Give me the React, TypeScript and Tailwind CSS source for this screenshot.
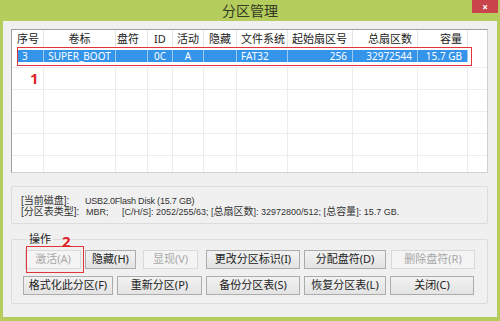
import React from 'react';

const cols = [
  { label: '序号', w: 32, align: 'text-left pl-[5px]' },
  { label: '卷标', w: 72, align: 'text-center' },
  { label: '盘符', w: 32, align: 'text-right pr-[8px]' },
  { label: 'ID', w: 25, align: 'text-center' },
  { label: '活动', w: 31, align: 'text-center' },
  { label: '隐藏', w: 33, align: 'text-center' },
  { label: '文件系统', w: 51, align: 'text-left pl-[4px]' },
  { label: '起始扇区号', w: 65, align: 'text-right pr-[5px]' },
  { label: '总扇区数', w: 65, align: 'text-right pr-[5px]' },
  { label: '容量', w: 50, align: 'text-right pr-[5px]' },
];

const rowData = ['3', 'SUPER_BOOT', '', '0C', 'A', '', 'FAT32', '256', '32972544', '15.7 GB'];

function Btn({ label, w, disabled }: { label: string; w: number; disabled?: boolean }) {
  return (
    <div
      style={{ width: w }}
      className={`h-[19px] flex items-center justify-center text-[11px] border ${
        disabled
          ? 'border-[#d9d9d9] bg-[#f4f4f4] text-[#a8a8a8]'
          : 'border-[#acacac] bg-gradient-to-b from-[#f2f2f2] to-[#e3e3e3] text-[#222]'
      }`}
    >
      {label}
    </div>
  );
}

export default function App() {
  return (
    <div className="w-[500px] h-[321px] bg-[#b4cd5c] flex flex-col font-['Noto_Sans','Noto_Sans_CJK_SC',sans-serif] text-[#222] overflow-hidden">
      {/* title bar */}
      <div className="h-[21px] relative flex items-center justify-center">
        <span className="text-[14px] text-[#333824] font-['Noto_Sans_CJK_SC',sans-serif]">分区管理</span>
        <div className="absolute top-0 right-[2px] w-[26px] h-[13px] bg-[#c9454b] flex items-center justify-center text-white text-[10px] leading-none font-bold">
          ×
        </div>
      </div>

      {/* client */}
      <div className="mx-[3px] mb-[4px] flex-1 bg-[#f0f0f0] pl-[8px] pr-[9px] pt-[8px] flex flex-col relative">
        {/* list view */}
        <div className="h-[144px] bg-white border border-[#a0a0a0] border-b-[#d0d0d0] border-r-[#d0d0d0] overflow-hidden">
          <div className="flex h-[17px] items-center text-[11px] text-[#222]">
            {cols.map((c) => (
              <div key={c.label} style={{ width: c.w }} className={`h-full leading-[17px] border-r border-[#e5e5e5] ${c.align}`}>
                {c.label}
              </div>
            ))}
            <div className="flex-1" />
          </div>
          <div className="h-[21px] flex items-center border-b border-[#ececec]">
            <div className="flex h-[12px] bg-[#3394ea] text-white text-[10px] leading-[12px] mx-[5px] -mt-[2px]">
              {cols.map((c, i) => (
                <div
                  key={c.label}
                  style={{ width: i === 0 ? c.w - 5 : c.w }}
                  className={`h-full border-r border-[#9ccaf5] ${c.align}`}
                >
                  {rowData[i]}
                </div>
              ))}
            </div>
          </div>
          {Array.from({ length: 5 }).map((_, r) => (
            <div key={r} className="h-[22px] flex border-b border-[#ececec]">
              {cols.map((c) => (
                <div key={c.label} style={{ width: c.w }} className="h-full border-r border-[#ececec]" />
              ))}
            </div>
          ))}
        </div>

        {/* disk info */}
        <div className="mt-[13px] h-[38px] border border-[#dcdcdc] rounded-[2px] pt-[8px] pl-[9px] text-[10px] leading-[11px] text-[#333] font-['Liberation_Sans','Noto_Sans_CJK_SC',sans-serif]">
          <div className="flex h-[11px] items-baseline">
            <span className="w-[64px]">[当前磁盘]:</span>
            <span className="text-[9px] tracking-[-0.2px]">USB2.0Flash Disk (15.7 GB)</span>
          </div>
          <div className="flex h-[11px] items-baseline">
            <span className="w-[65px]">[分区表类型]:</span>
            <span className="w-[36px] text-[9px]">MBR;</span>
            <span className="text-[9px]">
              [C/H/S]: 2052/255/63; [<span className="text-[10px]">总扇区数</span>]: 32972800/512; [
              <span className="text-[10px]">总容量</span>]: 15.7 GB.
            </span>
          </div>
        </div>

        {/* operations */}
        <fieldset className="mt-[9px] h-[71px] border border-[#dcdcdc] rounded-[2px] pl-[13px] pr-[2px]">
          <legend className="text-[11px] leading-[12px] px-[2px] ml-[2px] text-[#222]">操作</legend>
          <div className="flex flex-col gap-[7px] mt-[5px]">
            <div className="flex items-center">
              <Btn label="激活(A)" w={56} disabled />
              <div className="w-[4px]" />
              <Btn label="隐藏(H)" w={51} />
              <div className="w-[7px]" />
              <Btn label="显现(V)" w={55} disabled />
              <div className="w-[8px]" />
              <Btn label="更改分区标识(I)" w={94} />
              <div className="w-[4px]" />
              <Btn label="分配盘符(D)" w={82} />
              <div className="w-[5px]" />
              <Btn label="删除盘符(R)" w={84} disabled />
            </div>
            <div className="flex items-center -ml-[2px] gap-[4px]">
              <Btn label="格式化此分区(F)" w={90} />
              <Btn label="重新分区(P)" w={85} />
              <Btn label="备份分区表(S)" w={94} />
              <Btn label="恢复分区表(L)" w={82} />
              <Btn label="关闭(C)" w={84} />
            </div>
          </div>
        </fieldset>

        {/* annotations */}
        <div className="absolute left-[14px] top-[26px] w-[455px] h-[19px] border border-[#e0343a] pointer-events-none" />
        <div className="absolute left-[27px] top-[50px] text-[#e0242a] text-[15px] font-bold leading-none">1</div>
        <div className="absolute left-[23px] top-[225px] w-[58px] h-[27px] border border-[#e0343a] pointer-events-none" />
        <div className="absolute left-[59px] top-[213px] text-[#e0242a] text-[15px] font-bold leading-none">2</div>
      </div>
    </div>
  );
}
